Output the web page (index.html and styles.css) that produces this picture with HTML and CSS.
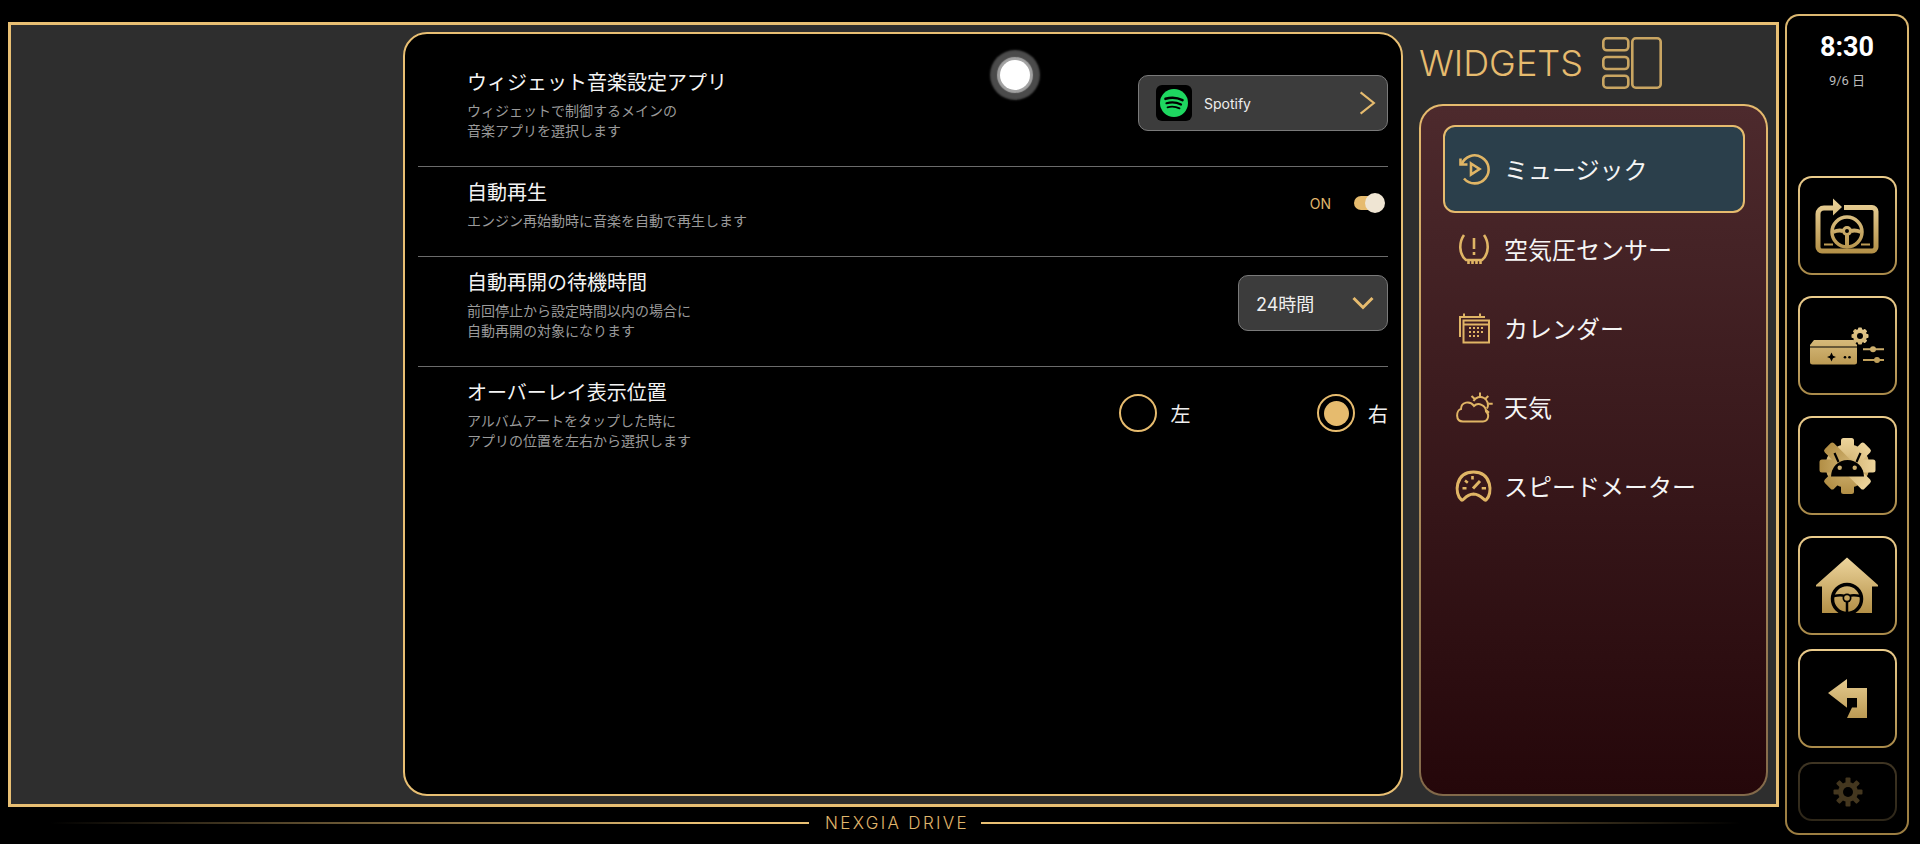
FILE: index.html
```html
<!DOCTYPE html>
<html lang="ja">
<head>
    <meta charset="UTF-8">
    <meta name="viewport" content="width=device-width, initial-scale=1.0">
    <title>Nexgia Drive</title>
    <link rel="stylesheet" href="styles.css">
</head>
<body>
    <svg class="svg-defs" aria-hidden="true">
        <defs>
            <linearGradient id="gold" gradientUnits="userSpaceOnUse" x1="0" y1="20" x2="0" y2="80">
                <stop offset="0" stop-color="#efd79f"/>
                <stop offset="1" stop-color="#b08c42"/>
            </linearGradient>
        </defs>
    </svg>

    <div class="app">
        <div class="main-col">
            <div class="frame">
                <section class="panel">
                    <div class="touch-dot"></div>

                    <div class="row">
                        <div class="row-text">
                            <h3>ウィジェット音楽設定アプリ</h3>
                            <p>ウィジェットで制御するメインの<br>音楽アプリを選択します</p>
                        </div>
                        <div class="app-select">
                            <span class="app-icon">
                                <svg viewBox="0 0 36 36" width="36" height="36">
                                    <circle cx="18" cy="18" r="14" fill="#1ed760"/>
                                    <path d="M9.5 13.8c5.5-1.6 12-1.2 17 1.4" fill="none" stroke="#000" stroke-width="2.6" stroke-linecap="round"/>
                                    <path d="M10.5 18.2c4.8-1.3 10.2-.9 14.5 1.3" fill="none" stroke="#000" stroke-width="2.2" stroke-linecap="round"/>
                                    <path d="M11.5 22.3c4-1 8.3-.7 12 1.1" fill="none" stroke="#000" stroke-width="1.8" stroke-linecap="round"/>
                                </svg>
                            </span>
                            <span class="app-name">Spotify</span>
                            <svg class="chevron-right" viewBox="0 0 16 22" width="17" height="24">
                                <path d="M1.5 1 14 11 1.5 21" fill="none" stroke="#e6bb6e" stroke-width="2"/>
                            </svg>
                        </div>
                    </div>

                    <div class="row">
                        <div class="row-text">
                            <h3>自動再生</h3>
                            <p>エンジン再始動時に音楽を自動で再生します</p>
                        </div>
                        <div class="toggle-wrap">
                            <span class="toggle-label">ON</span>
                            <span class="toggle"><span class="toggle-knob"></span></span>
                        </div>
                    </div>

                    <div class="row">
                        <div class="row-text">
                            <h3>自動再開の待機時間</h3>
                            <p>前回停止から設定時間以内の場合に<br>自動再開の対象になります</p>
                        </div>
                        <div class="dropdown">
                            <span>24時間</span>
                            <svg viewBox="0 0 22 14" width="22" height="14">
                                <path d="M1.5 2 11 11.5 20.5 2" fill="none" stroke="#e6bb6e" stroke-width="3"/>
                            </svg>
                        </div>
                    </div>

                    <div class="row row-last">
                        <div class="row-text">
                            <h3>オーバーレイ表示位置</h3>
                            <p>アルバムアートをタップした時に<br>アプリの位置を左右から選択します</p>
                        </div>
                        <div class="radios">
                            <label class="radio"><span class="radio-mark"></span>左</label>
                            <label class="radio"><span class="radio-mark checked"></span>右</label>
                        </div>
                    </div>
                </section>

                <aside class="widgets">
                    <header class="widgets-head">
                        <h1>WIDGETS</h1>
                        <svg viewBox="0 0 60 52" width="60" height="52">
                            <g fill="none" stroke="#c9a562" stroke-width="2.6">
                                <rect x="1.3" y="1.3" width="25" height="12" rx="3.5"/>
                                <rect x="1.3" y="20" width="25" height="12" rx="3.5"/>
                                <rect x="1.3" y="38.7" width="25" height="12" rx="3.5"/>
                                <rect x="30.3" y="1.3" width="28.4" height="49.4" rx="3.5"/>
                            </g>
                        </svg>
                    </header>

                    <nav class="widget-list">
                        <a class="widget-item active">
                            <svg class="widget-icon" viewBox="0 0 38 38">
                                <path d="M6.5 14.5A14 14 0 1 1 9 28.5"/>
                                <path d="M5.5 8.5v6h7"/>
                                <path d="M16 13.5 24.5 19 16 24.5z"/>
                            </svg>
                            <span>ミュージック</span>
                        </a>
                        <a class="widget-item">
                            <svg class="widget-icon" viewBox="0 0 38 38">
                                <path d="M9 5C4 12 3.5 24 11 30H27C34.500 24 34 12 29 5"/>
                                <path d="M13.500 30v4M17.500 30v4M21.500 30v4M25.500 30v4"/>
                                <path d="M19 8v11M19 22v3"/>
                            </svg>
                            <span>空気圧センサー</span>
                        </a>
                        <a class="widget-item">
                            <svg class="widget-icon thin" viewBox="0 0 38 38">
                                <path d="M5 28V8H30M9 4.500V8M25 4.500V8"/>
                                <rect x="8.500" y="11.500" width="25.500" height="22"/>
                                <path d="M8.500 15.500H34"/>
                                <path class="dots" d="M14 19H28M14 23H28M14 27H24"/>
                            </svg>
                            <span>カレンダー</span>
                        </a>
                        <a class="widget-item">
                            <svg class="widget-icon thin" viewBox="0 0 38 38">
                                <path d="M8 33.500H28C33 33.500 35 27 31 23.500C31 17 23 14 19 18C15 12 6 14 6 21C1 22 0 33.500 8 33.500Z"/>
                                <path d="M18.500 13A7.500 7.500 0 0 1 32 20.500"/>
                                <path d="M25 4.500V9M16.500 8 20 11.300M33.300 8 30 11.300M33.300 15.700H37.700M31 22 34 24.700"/>
                            </svg>
                            <span>天気</span>
                        </a>
                        <a class="widget-item">
                            <svg class="widget-icon" viewBox="0 0 38 38">
                                <path class="heavy" d="M6.500 33C-1 27 0 5 18.500 5C37 5 38 27 31 33C29 34.500 27 27.500 18.500 27C10 27.500 8.500 34.500 6.500 33Z"/>
                                <path class="heavy" d="M18 21.500 25 14"/>
                                <path d="M17.500 9V12.500M10 13.500 12.800 15.700M7.500 21.300H11.500M26.700 21.300H31"/>
                            </svg>
                            <span>スピードメーター</span>
                        </a>
                    </nav>
                </aside>
            </div>

            <footer class="brand">
                <span class="brand-line left"></span>
                <span class="brand-name">NEXGIA DRIVE</span>
                <span class="brand-line right"></span>
            </footer>
        </div>

        <aside class="sidebar">
            <div class="clock">
                <div class="clock-time">8:30</div>
                <div class="clock-date">9/6 日</div>
            </div>

            <button class="side-btn">
                <svg viewBox="2 2 95 95" width="95" height="95">
                    <path d="M46 31.500H74a4 4 0 0 1 4 4V71a4 4 0 0 1-4 4H24a4 4 0 0 1-4-4V38a6 6 0 0 1 6-6H36" fill="none" stroke="url(#gold)" stroke-width="5"/>
                    <path d="M35 22.500 44 31 35 39.500z" fill="url(#gold)"/>
                    <circle cx="49" cy="56" r="15" fill="none" stroke="url(#gold)" stroke-width="3.500"/>
                    <circle cx="49" cy="55" r="3.500" fill="none" stroke="url(#gold)" stroke-width="3"/>
                    <path d="M35 56c5-2 7-2 10-1M63 56c-5-2-7-2-10-1M49 59v11" fill="none" stroke="url(#gold)" stroke-width="4"/>
                    <path d="M26 68.500H35M63 68.500H72" stroke="url(#gold)" stroke-width="2"/>
                </svg>
            </button>

            <button class="side-btn">
                <svg viewBox="2 2 95 95" width="95" height="95">
                    <path d="M12 49 16 44H55L59 49V66a2.500 2.500 0 0 1-2.500 2.500H14.500A2.500 2.500 0 0 1 12 66z" fill="url(#gold)"/>
                    <path d="M12 51H59" stroke="#000" stroke-width="1"/>
                    <path d="M33.500 56.500 35 59.800 38 61 35 62.200 33.500 65.500 32 62.200 29 61 32 59.800z" fill="#000"/>
                    <circle cx="47" cy="61.300" r="1.300" fill="#000"/>
                    <circle cx="51.500" cy="61.300" r="1.300" fill="#000"/>
                    <g fill="url(#gold)">
                        <rect x="60" y="31.500" width="4" height="17" rx="1"/>
                        <rect x="60" y="31.500" width="4" height="17" rx="1" transform="rotate(45 62 40)"/>
                        <rect x="60" y="31.500" width="4" height="17" rx="1" transform="rotate(90 62 40)"/>
                        <rect x="60" y="31.500" width="4" height="17" rx="1" transform="rotate(135 62 40)"/>
                    </g>
                    <circle cx="62" cy="40" r="5.500" fill="none" stroke="url(#gold)" stroke-width="3"/>
                    <circle cx="62" cy="40" r="3" fill="#000"/>
                    <path d="M65 53.300H86M65 64H86" stroke="url(#gold)" stroke-width="2"/>
                    <circle cx="75" cy="53.300" r="3" fill="url(#gold)"/>
                    <circle cx="79" cy="64" r="3" fill="url(#gold)"/>
                </svg>
            </button>

            <button class="side-btn">
                <svg viewBox="2 2 95 95" width="95" height="95">
                    <g fill="url(#gold)">
                        <circle cx="49.500" cy="50" r="22"/>
                        <rect x="43" y="22" width="13" height="56" rx="2.500"/>
                        <rect x="43" y="22" width="13" height="56" rx="2.500" transform="rotate(45 49.500 50)"/>
                        <rect x="43" y="22" width="13" height="56" rx="2.500" transform="rotate(90 49.500 50)"/>
                        <rect x="43" y="22" width="13" height="56" rx="2.500" transform="rotate(135 49.500 50)"/>
                    </g>
                    <path d="M33 60.500A16.500 16.500 0 0 1 66 60.500z" fill="#000"/>
                    <path d="M40.500 46 36.500 37M58.500 46 62.500 37" stroke="#000" stroke-width="2.200"/>
                    <circle cx="41.700" cy="51.700" r="2.200" fill="url(#gold)"/>
                    <circle cx="56.700" cy="51.700" r="2.200" fill="url(#gold)"/>
                </svg>
            </button>

            <button class="side-btn">
                <svg viewBox="2 2 95 95" width="95" height="95">
                    <path d="M49 21.500 80 49V50.500H74V77H24V50.500H18V49z" fill="url(#gold)"/>
                    <circle cx="49" cy="63" r="14.500" fill="none" stroke="#000" stroke-width="3.500"/>
                    <path d="M35.500 60c5-1 9-1 11 0M62.500 60c-5-1-9-1-11 0M49 65V77" fill="none" stroke="#000" stroke-width="2.500"/>
                    <circle cx="49" cy="62" r="4.500" fill="#000"/>
                    <circle cx="49" cy="62" r="2.800" fill="url(#gold)"/>
                </svg>
            </button>

            <button class="side-btn back">
                <svg viewBox="2 2 95 95" width="95" height="95">
                    <path d="M30 44 49 30V39H69V69H49L54 58.500H59V49H49V58.700z" fill="url(#gold)"/>
                </svg>
            </button>

            <button class="side-btn small">
                <svg viewBox="0 0 30 30" width="30" height="30">
                    <g fill="#44371f">
                        <rect x="12.500" y="0.500" width="5" height="29" rx="1"/>
                        <rect x="12.500" y="0.500" width="5" height="29" rx="1" transform="rotate(45 15 15)"/>
                        <rect x="12.500" y="0.500" width="5" height="29" rx="1" transform="rotate(90 15 15)"/>
                        <rect x="12.500" y="0.500" width="5" height="29" rx="1" transform="rotate(135 15 15)"/>
                    </g>
                    <circle cx="15" cy="15" r="10" fill="#44371f"/>
                    <circle cx="15" cy="15" r="5" fill="#000"/>
                </svg>
            </button>
        </aside>
    </div>
</body>
</html>
```

FILE: styles.css
```css
body {
    margin: 0;
    height: 844px;
    overflow: hidden;
    background: #000;
    color: #fff;
    font-family: 'Noto Sans CJK JP', sans-serif;
}

h1, h3, p {
    margin: 0;
    font-weight: 400;
}

.svg-defs {
    position: absolute;
    width: 0;
    height: 0;
}

.app {
    display: flex;
    align-items: flex-start;
    padding-left: 8px;
}

.main-col {
    width: 1771px;
    padding-top: 22px;
}

.frame {
    box-sizing: border-box;
    display: flex;
    height: 785px;
    padding: 7px 8px 8px 392px;
    border: 3px solid #e8bf73;
    background: #2e2e2e;
}

/* settings panel */

.panel {
    position: relative;
    box-sizing: border-box;
    width: 1000px;
    height: 764px;
    padding: 23px 13px 0;
    border: 2px solid #e8bf73;
    border-radius: 24px;
    background: #000;
}

.touch-dot {
    position: absolute;
    left: 595px;
    top: 26px;
    width: 30px;
    height: 30px;
    border-radius: 50%;
    background: #fff;
    box-shadow: 0 0 1px 3px #a3a3a3, 0 0 2px 10px #4b4b4b;
}

.row {
    display: flex;
    justify-content: space-between;
    align-items: center;
    padding: 11px 0 26px 49px;
    border-bottom: 1px solid #6b6b6b;
}

.row-last {
    border-bottom: none;
}

.row-text h3 {
    font-size: 20px;
    line-height: 28px;
    color: #f4f4f4;
}

.row-text p {
    margin-top: 4px;
    font-size: 14px;
    line-height: 20px;
    color: #9a9a9a;
}

.app-select {
    box-sizing: border-box;
    display: flex;
    align-items: center;
    width: 250px;
    height: 56px;
    margin-bottom: 2px;
    padding: 0 11px 0 17px;
    border: 1px solid #7a7a7a;
    border-radius: 10px;
    background: #3c3c3c;
}

.app-icon {
    width: 36px;
    height: 36px;
    border-radius: 6px;
    background: #000;
}

.app-name {
    flex: 1;
    margin-left: 12px;
    font-family: 'Inter', sans-serif;
    font-size: 14px;
    color: #eee;
}

.toggle-wrap {
    display: flex;
    align-items: center;
    gap: 23px;
    margin: 0 6px 2px 0;
}

.toggle-label {
    font-family: 'Inter', sans-serif;
    font-size: 14px;
    color: #e0b66c;
}

.toggle {
    position: relative;
    display: block;
    width: 28px;
    height: 14px;
    border-radius: 7px;
    background: #e6bb6e;
}

.toggle-knob {
    position: absolute;
    top: -3px;
    right: -3px;
    width: 20px;
    height: 20px;
    border-radius: 50%;
    background: #efe5d3;
}

.dropdown {
    box-sizing: border-box;
    display: flex;
    justify-content: space-between;
    align-items: center;
    width: 150px;
    height: 56px;
    margin-bottom: 2px;
    padding: 0 13px 0 17px;
    border: 1px solid #7a7a7a;
    border-radius: 10px;
    background: #3c3c3c;
    font-family: 'Inter', 'Noto Sans CJK JP', sans-serif;
    font-size: 18px;
    color: #eee;
}

.radios {
    display: flex;
    gap: 126px;
    margin-bottom: 2px;
}

.radio {
    display: flex;
    align-items: center;
    gap: 13.500px;
    font-size: 20px;
    color: #eee;
}

.radio-mark {
    box-sizing: border-box;
    display: block;
    width: 38px;
    height: 38px;
    border: 2px solid #e6bb6e;
    border-radius: 50%;
}

.radio-mark.checked {
    padding: 4.500px;
    background: #e6bb6e content-box;
}

/* widgets column */

.widgets {
    box-sizing: border-box;
    width: 349px;
    margin-left: 16px;
    display: flex;
    flex-direction: column;
}

.widgets-head {
    display: flex;
    align-items: center;
    gap: 19px;
    height: 62px;
    margin-bottom: 10px;
}

.widgets-head h1 {
    font-family: 'Inter', sans-serif;
    font-size: 36px;
    font-weight: 300;
    color: #e6bb6e;
}

.widget-list {
    box-sizing: border-box;
    flex: 1;
    padding: 19px 21px 0 22px;
    border: 2px solid transparent;
    border-radius: 24px;
    background: linear-gradient(#4d2a2d, #25070a) padding-box,
                linear-gradient(#e6bb6e, #82694a) border-box;
}

.widget-item {
    box-sizing: border-box;
    display: flex;
    align-items: center;
    gap: 11px;
    height: 79px;
    padding-left: 12px;
    font-size: 24px;
    line-height: 1;
    color: #f5f5f5;
}

.widget-item.active {
    height: 88px;
    margin-bottom: -4px;
    padding-left: 10px;
    border: 2px solid #e6bb6e;
    border-radius: 12px;
    background: #2b3f4b;
}

.widget-icon {
    flex: none;
    width: 38px;
    height: 38px;
    overflow: visible;
    fill: none;
    stroke: #e0b565;
    stroke-width: 2.600;
}

.widget-icon.thin {
    stroke-width: 2;
}

.widget-icon .heavy {
    stroke-width: 3;
}

.widget-icon .dots {
    stroke-dasharray: 2 2;
}

/* footer */

.brand {
    display: flex;
    align-items: center;
    height: 32px;
    padding: 0 39px 0 42px;
}

.brand-line {
    flex: 1;
    height: 2px;
}

.brand-line.left {
    background: linear-gradient(to right, transparent, #e8bf73 85%);
}

.brand-line.right {
    background: linear-gradient(to left, transparent, #e8bf73 85%);
}

.brand-name {
    margin: 0 12px 0 16px;
    font-family: 'Inter', sans-serif;
    font-size: 17px;
    font-weight: 300;
    letter-spacing: 2.300px;
    color: #e0b66c;
}

/* right sidebar */

.sidebar {
    box-sizing: border-box;
    width: 124px;
    height: 821px;
    margin: 14px 0 0 6px;
    padding: 0 11px;
    border: 2px solid transparent;
    border-radius: 14px;
    background: linear-gradient(#000, #000) padding-box,
                linear-gradient(#dcb871, #9c7e42) border-box;
    display: flex;
    flex-direction: column;
}

.clock {
    height: 160px;
    padding-top: 16px;
    box-sizing: border-box;
    text-align: center;
}

.clock-time {
    font-family: 'Roboto', sans-serif;
    font-size: 27px;
    font-weight: 700;
    line-height: 30px;
}

.clock-date {
    margin-top: 10px;
    font-family: 'Roboto', 'Noto Sans CJK JP', sans-serif;
    font-size: 13px;
    line-height: 18px;
    color: #bbb;
}

.side-btn {
    box-sizing: border-box;
    flex: none;
    display: flex;
    justify-content: center;
    align-items: center;
    width: 99px;
    height: 99px;
    margin-bottom: 21px;
    padding: 0;
    border: 2px solid transparent;
    border-radius: 14px;
    background: linear-gradient(#000, #000) padding-box,
                linear-gradient(#ebcc8c, #a98a4a) border-box;
}

.side-btn.back {
    margin-top: -7px;
    margin-bottom: 14px;
}

.side-btn.small {
    height: 59px;
    margin-bottom: 0;
    background: linear-gradient(#000, #000) padding-box,
                linear-gradient(#3f3523, #2e2719) border-box;
}
```
